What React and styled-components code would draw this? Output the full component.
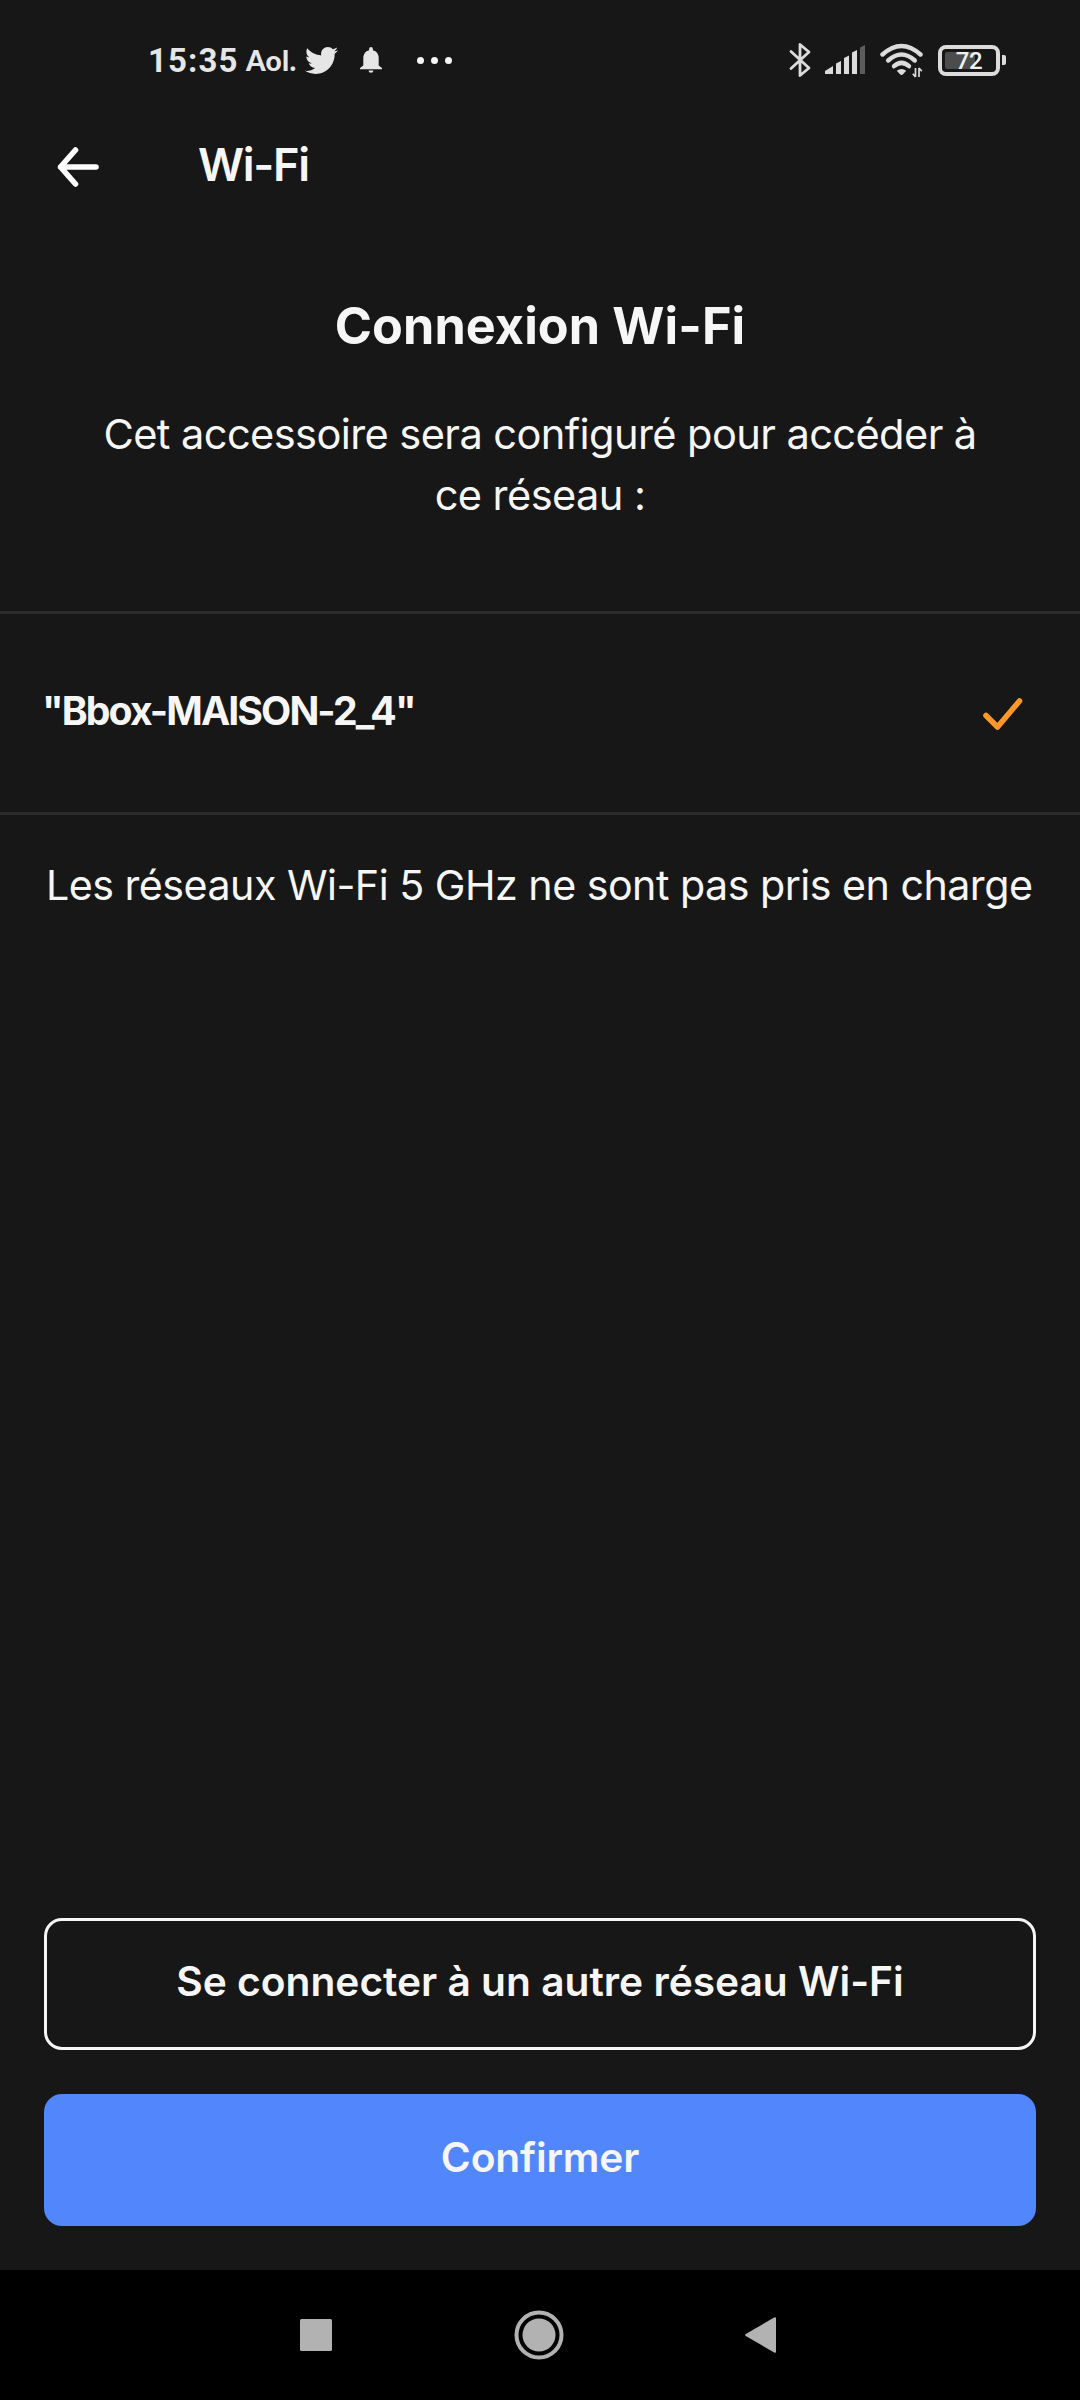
import React from 'react';
import styled, { createGlobalStyle } from 'styled-components';
import { FaTwitter } from 'react-icons/fa';


const GlobalStyle = createGlobalStyle`
  body {
    margin: 0;
    background: #171717;
  }
  * {
    box-sizing: border-box;
  }
`;

const Screen = styled.div`
  display: flex;
  flex-direction: column;
  width: 1080px;
  height: 2400px;
  overflow: hidden;
  color: #f6f6f6;
  background: #171717;
  font-family: Inter, "Liberation Sans", sans-serif;
`;

const StatusBar = styled.div`
  display: flex;
  justify-content: space-between;
  height: 120px;
  margin-bottom: -20px;
  padding: 0 74px 0 148px;
  color: #e6e6e6;
`;
const StatusSide = styled.div`
  display: flex;
  align-items: center;

  & svg {
    display: block;
    flex: none;
  }
`;
const Clock = styled.span`
  width: 98px;
  padding-top: 2px;
  font: 700 33px/40px Roboto, sans-serif;
  letter-spacing: 1.1px;
  white-space: nowrap;
`;
const Carrier = styled.span`
  width: 59px;
  font: 900 28px/40px Lato, sans-serif;
  letter-spacing: .3px;
`;
const BellIcon = styled.svg`
  margin-left: 22px;
`;
const Dots = styled.div`
  display: flex;
  gap: 7px;
  margin-left: 35px;

  & i {
    width: 7px;
    height: 7px;
    border-radius: 50%;
    background: #f6f6f6;
  }
`;
const SignalIcon = styled.svg`
  margin-left: 13px;
`;
const WifiIcon = styled.svg`
  margin-left: 15px;
`;
const Battery = styled.div`
  display: flex;
  align-items: center;
  margin-left: 14px;

  &:after {
    content: '';
    width: 4px;
    height: 10px;
    margin-left: 2px;
    border-radius: 0 2px 2px 0;
    background: #dcdcdc;
  }
`;
const BatteryBody = styled.div`
  width: 62px;
  height: 31px;
  padding: 3px;
  border: 4px solid #dcdcdc;
  border-radius: 8px;
`;
const BatteryLevel = styled.div`
  height: 17px;
  border-radius: 2px;
  background: linear-gradient(to right, #4c4c4c ${p => p.$level}%, transparent ${p => p.$level}%);
  font: 500 24px/18px Roboto, sans-serif;
  letter-spacing: -.5px;
  text-align: center;
  color: #f0f0f0;
`;

const Header = styled.div`
  display: flex;
  align-items: center;
  height: 134px;
  padding-left: 55px;
`;
const HeaderTitle = styled.div`
  margin-left: 97px;
  padding-bottom: 4px;
  font-size: 45.2px;
  font-weight: 600;
  line-height: 60px;
  letter-spacing: -1.3px;
`;

const Intro = styled.div`
  padding: 62px 80px 87px;
  text-align: center;
`;
const Title = styled.h1`
  margin: 0 0 48px;
  font-size: 50.3px;
  font-weight: 700;
  line-height: 60px;
  letter-spacing: .1px;
`;
const Text = styled.p`
  margin: 0;
  font-size: 41.6px;
  line-height: 60.5px;
  letter-spacing: -.6px;
`;

const Network = styled.div`
  display: flex;
  align-items: center;
  justify-content: space-between;
  height: 204px;
  margin-top: -1px;
  padding: 0 55px 0 42px;
  border: solid #2b2b2b;
  border-width: 3px 0;
`;
const NetworkName = styled.div`
  padding-bottom: 4px;
  font-size: 39.2px;
  font-weight: 700;
  line-height: 50px;
  letter-spacing: -1.9px;
`;
const Note = styled.div`
  padding: 40px 0 0 46px;
  font-size: 41.2px;
  line-height: 60px;
  letter-spacing: -.52px;
  white-space: nowrap;
`;

const Actions = styled.div`
  display: flex;
  flex-direction: column;
  gap: 44px;
  margin-top: auto;
  padding: 44px;
`;
const Button = styled.button`
  height: 132px;
  padding: 0 0 5px;
  color: inherit;
  font-family: inherit;
  font-size: 40.7px;
  font-weight: 600;
  letter-spacing: ${p => p.$primary ? '-.15px' : '0'};
  border: 3px solid ${p => p.$primary ? '#5286fd' : '#f6f6f6'};
  border-radius: 18px;
  background: ${p => p.$primary ? '#5286fd' : 'transparent'};
`;

const NavBar = styled.div`
  display: flex;
  align-items: center;
  flex: none;
  height: 130px;
  padding-left: 300px;
  background: #000;
`;
const HomeIcon = styled.svg`
  margin: 0 181px 0 182px;
`;

const StatusIcons = () => (
  <StatusSide>
    <svg width="23" height="36" viewBox="0 0 23 36" fill="none" stroke="#dcdcdc" strokeWidth="2.8" strokeLinejoin="round" strokeLinecap="round">
      <path d="M2 9.500L20 26L11 33.500V2.500L20 10L2 26.500" />
    </svg>
    <SignalIcon width="40" height="30" viewBox="0 0 40 30" fill="#dcdcdc">
      <path d="M0 29V26L8 21V29ZM11 18.500L16 16V29H11ZM19 13L24 10.500V29H19ZM27 7.500L32 5V29H27Z" />
      <path d="M35 2.500L40 0V29H35Z" fill="#5c5c5c" />
    </SignalIcon>
    <WifiIcon width="44" height="36" viewBox="0 0 44 36" fill="none">
      <g stroke="#dcdcdc" strokeWidth="4.400">
        <path d="M2.500 12.500Q21.500 -4.500 40.500 12.500" strokeLinecap="round" />
        <path d="M8.200 18.500Q21.500 6.500 34.800 18.500" strokeLinecap="round" />
        <path d="M14 24.200Q21.500 17.500 29 24.200" strokeLinecap="round" />
      </g>
      <path d="M16.800 28.800Q21.500 25 26.200 28.800L23 32.300Q21.500 33.600 20 32.300Z" fill="#dcdcdc" />
      <path d="M35.500 26V35M32.800 31.800L35.500 35M39 35V26M41.800 29.200L39 26" stroke="#dcdcdc" strokeWidth="1.700" />
    </WifiIcon>
    <Battery>
      <BatteryBody>
        <BatteryLevel $level={62}>72</BatteryLevel>
      </BatteryBody>
    </Battery>
  </StatusSide>
);

const App = () => (
  <Screen>
    <GlobalStyle />

    <StatusBar>
      <StatusSide>
        <Clock>15:35</Clock>
        <Carrier>Aol.</Carrier>
        <FaTwitter size={33} />
        <BellIcon width="22" height="26" viewBox="0 0 22 26" fill="#e6e6e6">
          <path d="M11 0Q12.900 0 12.900 2V3.200Q18.700 4.800 18.700 11.500V18.500L22 21V22.200H0V21L3.300 18.500V11.500Q3.300 4.800 9.100 3.200V2Q9.100 0 11 0Z" />
          <path d="M8.500 23.400H13.500Q13.200 25.800 11 25.800Q8.800 25.800 8.500 23.400Z" />
        </BellIcon>
        <Dots><i /><i /><i /></Dots>
      </StatusSide>
      <StatusIcons />
    </StatusBar>

    <Header>
      <svg width="46" height="42" viewBox="0 0 46 42" fill="none" stroke="#fff" strokeWidth="5.600" strokeLinecap="round" strokeLinejoin="round">
        <path d="M41 21H5.500M20.500 4L5.500 21L20.500 38" />
      </svg>
      <HeaderTitle>Wi-Fi</HeaderTitle>
    </Header>

    <Intro>
      <Title>Connexion Wi-Fi</Title>
      <Text>Cet accessoire sera configuré pour accéder à ce réseau :</Text>
    </Intro>

    <Network>
      <NetworkName>"Bbox-MAISON-2_4"</NetworkName>
      <svg width="44" height="36" viewBox="0 0 44 36" fill="none" stroke="#ff9827" strokeWidth="5.600" strokeLinecap="round" strokeLinejoin="round">
        <path d="M5 20.500L16.500 32L38.500 6" />
      </svg>
    </Network>
    <Note>Les réseaux Wi-Fi 5 GHz ne sont pas pris en charge</Note>

    <Actions>
      <Button>Se connecter à un autre réseau Wi-Fi</Button>
      <Button $primary>Confirmer</Button>
    </Actions>

    <NavBar>
      <svg width="32" height="32" viewBox="0 0 32 32" fill="#b2b2b2">
        <rect width="32" height="32" rx="1.500" />
      </svg>
      <HomeIcon width="50" height="50" viewBox="0 0 50 50">
        <circle cx="25" cy="25" r="22.500" fill="none" stroke="#b2b2b2" strokeWidth="4" />
        <circle cx="25" cy="25" r="16.500" fill="#b2b2b2" />
      </HomeIcon>
      <svg width="31" height="38" viewBox="0 0 31 38" fill="#b2b2b2">
        <path d="M31 2.500V35.500Q31 37.500 29.200 36.500L.8 20Q-.6 19 .8 18L29.200 1.500Q31 .5 31 2.500Z" />
      </svg>
    </NavBar>
  </Screen>
);

export default App;
